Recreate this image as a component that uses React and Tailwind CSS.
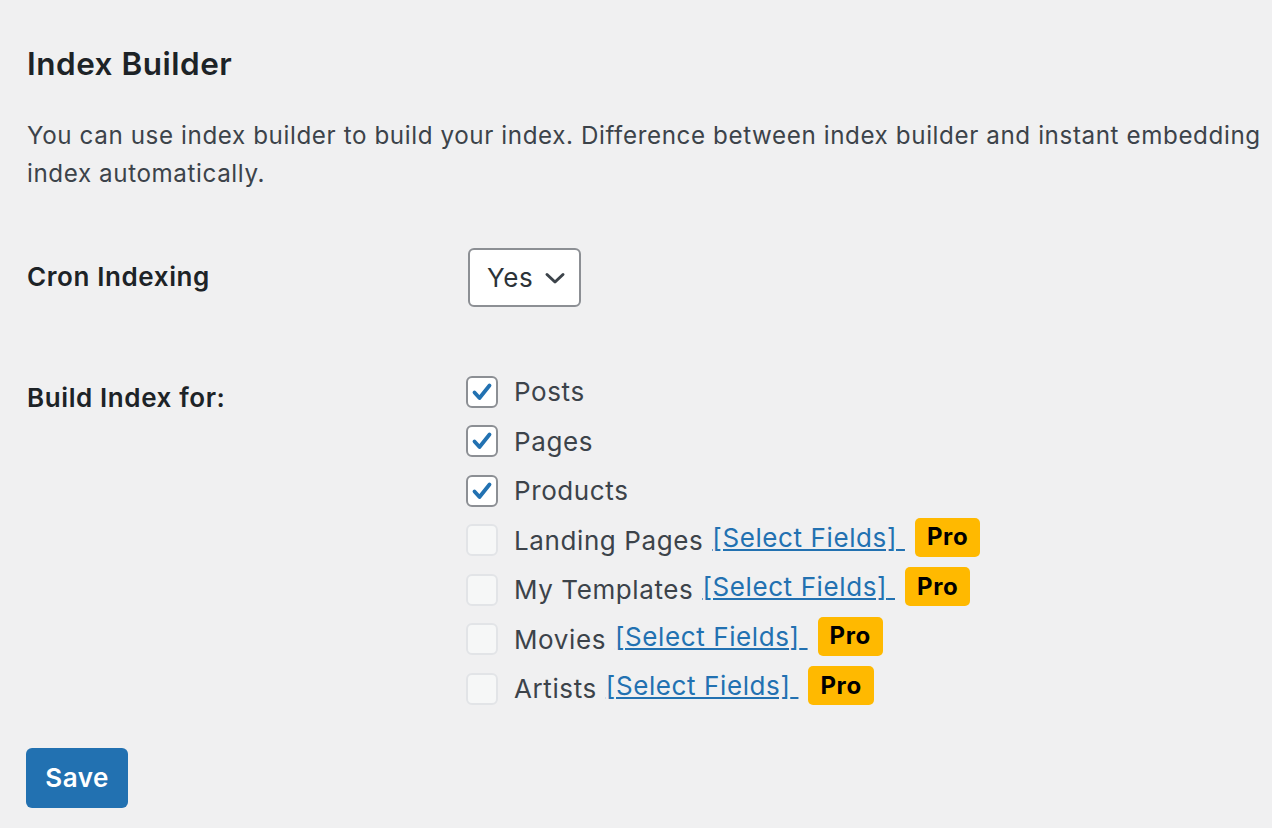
import React from "react";

const postTypes = [
  { label: "Posts", checked: true },
  { label: "Pages", checked: true },
  { label: "Products", checked: true },
  { label: "Landing Pages", pro: true },
  { label: "My Templates", pro: true },
  { label: "Movies", pro: true },
  { label: "Artists", pro: true },
];

function Checkbox({ checked, disabled }) {
  if (disabled) {
    return (
      <span className="w-[32px] h-[32px] shrink-0 rounded-[6px] border-2 border-[#e2e4e7] bg-[#f6f7f7]" />
    );
  }
  return (
    <span className="w-[32px] h-[32px] shrink-0 rounded-[6px] border-2 border-[#8c8f94] bg-white flex items-center justify-center">
      {checked && (
        <svg viewBox="0 0 24 24" className="w-[24px] h-[24px]">
          <path
            d="M4.5 12.5 L9.5 18 L19.5 5.5"
            fill="none"
            stroke="#2271b1"
            strokeWidth="3.8"
            strokeLinecap="round"
            strokeLinejoin="round"
          />
        </svg>
      )}
    </span>
  );
}

export default function App() {
  return (
    <div
      className="min-h-screen bg-[#f0f0f1] px-[27px] pt-[45px] overflow-hidden"
      style={{ fontFamily: "Inter, 'Noto Sans', sans-serif" }}
    >
      <h2 className="text-[31.5px] leading-[38px] font-semibold text-[#1d2327] tracking-[0.5px]">
        Index Builder
      </h2>
      <p className="mt-[34px] text-[24.2px] leading-[38px] text-[#3c434a] whitespace-nowrap tracking-[0.6px]">
        You can use index builder to build your index. Difference between index builder and instant embedding
        <br />
        index automatically.
      </p>

      <div className="mt-[57px] grid grid-cols-[441px_1fr] tracking-[0.6px]">
        <div className="text-[26px] font-semibold text-[#1d2327] leading-[38px] pt-[8px]">
          Cron Indexing
        </div>
        <div>
          <div className="inline-flex items-center h-[59px] w-[113px] -mt-[2px] border-2 border-[#8c8f94] rounded-[6px] bg-white pl-[17px] text-[26px] text-[#2c3338]">
            Yes
            <svg viewBox="0 0 24 24" className="w-[24px] h-[24px] ml-[10px]">
              <path d="M4 8.5 L12 16 L20 8.5" fill="none" stroke="#3c434a" strokeWidth="3" strokeLinecap="round" strokeLinejoin="round" />
            </svg>
          </div>
        </div>

        <div className="mt-[60px] text-[26px] font-semibold text-[#1d2327] leading-[38px] pt-[12px]">
          Build Index for:
        </div>
        <div className="mt-[60px] flex flex-col -ml-[2px]">
          {postTypes.map((t) => (
            <div key={t.label} className="h-[49.5px] flex items-center">
              <Checkbox checked={t.checked} disabled={t.pro} />
              <span className="ml-[16px] text-[26px] text-[#3c434a] whitespace-nowrap">
                {t.label}
              </span>
              {t.pro && (
                <>
                  <a href="#" className="ml-[9px] text-[26px] text-[#2271b1] underline whitespace-pre -mt-[6px]">
                    [Select Fields]{" "}
                  </a>
                  <span className="ml-[10px] -mt-[6px] h-[39px] px-[12px] rounded-[5px] bg-[#ffb900] text-black font-bold text-[24px] flex items-center">
                    Pro
                  </span>
                </>
              )}
            </div>
          ))}
        </div>
      </div>

      <button className="mt-[34px] h-[60px] w-[102px] rounded-[6px] bg-[#2271b1] text-white text-[26px] font-semibold -ml-px tracking-[0.5px]">
        Save
      </button>
    </div>
  );
}
